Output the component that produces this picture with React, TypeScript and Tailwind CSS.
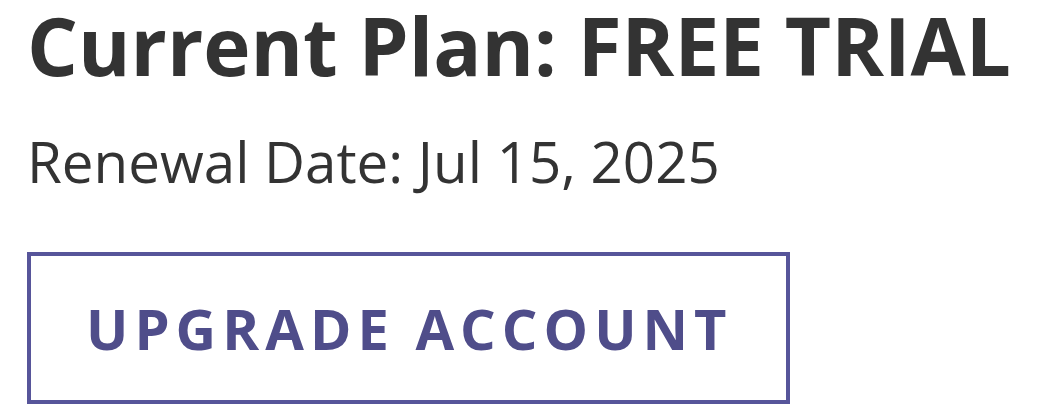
import React from 'react';

const App: React.FC = () => {
  return (
    <div className="min-h-screen bg-white pl-[27px] pt-[5px] font-['Open_Sans',sans-serif]">
      {/* Plan summary */}
      <h1 className="text-[80px] leading-none font-bold text-[#333333] whitespace-nowrap">
        Current Plan: FREE TRIAL
      </h1>
      <p className="mt-[49px] text-[56.5px] leading-none text-[#333333] whitespace-nowrap">
        Renewal Date: Jul 15, 2025
      </p>

      {/* Upgrade action */}
      <button className="mt-[61px] border-4 border-[#57559a] bg-white pt-[44px] pb-[44px] pl-[55px] pr-[53px] text-[56px] leading-none font-bold tracking-[0.108em] text-[#4f4d8a] whitespace-nowrap">
        UPGRADE ACCOUNT
      </button>
    </div>
  );
};

export default App;
